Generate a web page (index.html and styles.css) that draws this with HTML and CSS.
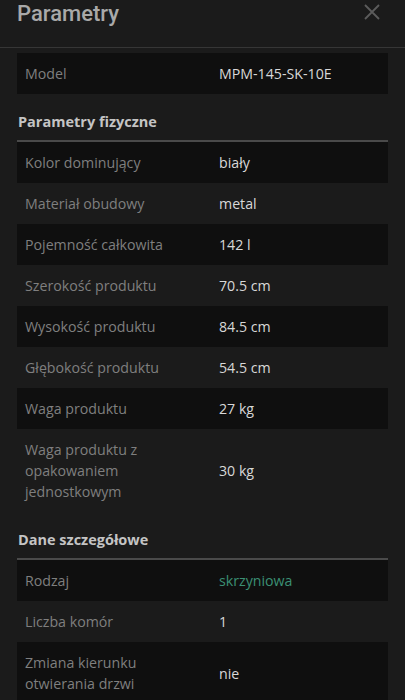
FILE: index.html
```html
<!DOCTYPE html>
<html lang="pl">
<head>
<meta charset="utf-8">
<link rel="stylesheet" href="styles.css">
</head>
<body>
<div class="sheet">
  <header class="head">
    <h1 class="title">Parametry</h1>
    <svg class="close" width="18" height="18" viewBox="0 0 18 18"><path d="M2 2L16 16M16 2L2 16" stroke="#5c5c5c" stroke-width="1.8" fill="none"/></svg>
  </header>
  <div class="content">
    <div class="table">
      <div class="row dark"><div class="lab">Model</div><div class="val">MPM-145-SK-10E</div></div>
    </div>
    <h2 class="sec">Parametry fizyczne</h2>
    <div class="table ruled">
      <div class="row dark"><div class="lab">Kolor dominujący</div><div class="val">biały</div></div>
      <div class="row"><div class="lab">Materiał obudowy</div><div class="val">metal</div></div>
      <div class="row dark"><div class="lab">Pojemność całkowita</div><div class="val">142 l</div></div>
      <div class="row"><div class="lab">Szerokość produktu</div><div class="val">70.5 cm</div></div>
      <div class="row dark"><div class="lab">Wysokość produktu</div><div class="val">84.5 cm</div></div>
      <div class="row"><div class="lab">Głębokość produktu</div><div class="val">54.5 cm</div></div>
      <div class="row dark"><div class="lab">Waga produktu</div><div class="val">27 kg</div></div>
      <div class="row"><div class="lab">Waga produktu z opakowaniem jednostkowym</div><div class="val">30 kg</div></div>
    </div>
    <h2 class="sec">Dane szczegółowe</h2>
    <div class="table ruled">
      <div class="row dark"><div class="lab">Rodzaj</div><div class="val link">skrzyniowa</div></div>
      <div class="row"><div class="lab">Liczba komór</div><div class="val">1</div></div>
      <div class="row dark"><div class="lab">Zmiana kierunku otwierania drzwi</div><div class="val">nie</div></div>
    </div>
  </div>
</div>
</body>
</html>
```
FILE: styles.css
```css
html, body {
  margin: 0;
  padding: 0;
  background: #1b1b1b;
  overflow: hidden;
}
body {
  font-family: "Open Sans", "DejaVu Sans", sans-serif;
  font-size: 14.2px;
  color: #d6d6d6;
}
.sheet {
  width: 405px;
}
.head {
  display: flex;
  justify-content: space-between;
  align-items: flex-start;
  border-bottom: 1px solid #363636;
  padding: 0 17px;
  box-sizing: border-box;
  height: 48px;
}
.title {
  margin: 0;
  margin-top: -1px;
  font-family: Roboto, "Noto Sans", sans-serif;
  font-weight: 500;
  font-size: 22px;
  line-height: 30px;
  color: #a9a9a9;
}
.close {
  margin-top: 3px;
  margin-right: 7px;
}
.content {
  padding: 5px 17px 0;
}
.table {
  display: flex;
  flex-direction: column;
}
.ruled {
  border-top: 2px solid #4a4a4a;
}
.row {
  display: grid;
  grid-template-columns: 194px 1fr;
  align-items: center;
  min-height: 41px;
  line-height: 21px;
}
.row.dark {
  background: #0f0f0f;
}
.lab {
  padding: 10px 8px;
  color: #7f7f7f;
}
.val {
  padding: 10px 8px;
  color: #d8d8d8;
}
.val.link {
  color: #3b8f74;
}
.sec {
  margin: 0;
  padding: 18px 0 8px 1px;
  font-size: 14.5px;
  font-weight: 700;
  line-height: 20px;
  color: #c4c4c4;
}
```
